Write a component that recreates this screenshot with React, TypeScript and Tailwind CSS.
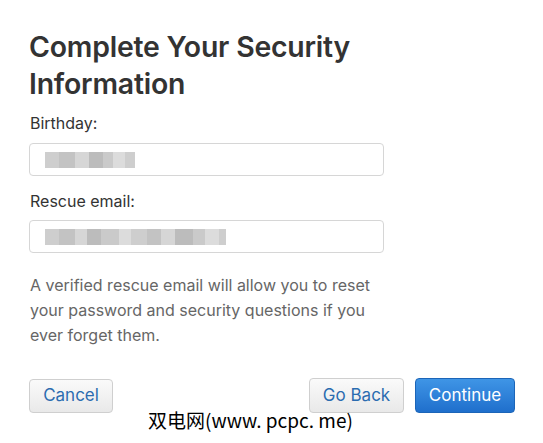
import React from "react";

function Blur({ widths }: { widths: number[] }) {
  const shades = ["#c9c9c9", "#bdbdbd", "#d2d2d2", "#b5b5b5", "#c4c4c4", "#d8d8d8"];
  return (
    <div className="flex h-[16px] items-center">
      {widths.map((w, i) => (
        <div
          key={i}
          className="h-full"
          style={{ width: w, background: shades[i % shades.length], opacity: 0.9 }}
        />
      ))}
    </div>
  );
}

export default function App() {
  return (
    <div
      className="relative h-[443px] w-[543px] overflow-hidden bg-white"
      style={{ fontFamily: "Inter, 'Noto Sans', sans-serif" }}
    >
      <div className="pl-[29px] pt-[28px]">
        <h1 className="text-[28.4px] font-semibold leading-[37px] tracking-[-0.2px] text-[#333333]">
          Complete Your Security
          <br />
          Information
        </h1>
        <div className="mt-[11px] w-[355px]">
          <div className="pl-[1px] text-[16px] leading-[20px] text-[#333333]">Birthday:</div>
          <div className="mt-[10px] flex h-[33px] items-center rounded-[4px] border border-[#d6d6d6] px-[15px]">
            <Blur widths={[14, 16, 14, 14, 10, 12, 10]} />
          </div>
          <div className="mt-[15px] pl-[1px] text-[16px] leading-[20px] text-[#333333]">Rescue email:</div>
          <div className="mt-[9px] flex h-[33px] items-center rounded-[4px] border border-[#d6d6d6] px-[15px]">
            <Blur widths={[14, 16, 12, 14, 18, 12, 16, 14, 14, 18, 12, 14, 7]} />
          </div>
        </div>
        <p className="mt-[20px] w-[360px] pl-[1px] text-[16px] leading-[25px] text-[#666666]">
          A verified rescue email will allow you to reset your password and security questions if you ever forget them.
        </p>
        <div className="mt-[30px] flex w-[486px] items-center">
          <button className="h-[34px] w-[84px] rounded-[4px] border border-[#cfcfcf] bg-gradient-to-b from-[#fafafa] to-[#e9e9e9] text-[17px] text-[#2b6cb0]">
            Cancel
          </button>
          <div className="ml-auto flex gap-[11px]">
            <button className="h-[35px] w-[95px] rounded-[4px] border border-[#cfcfcf] bg-gradient-to-b from-[#fafafa] to-[#e9e9e9] text-[17px] text-[#2b6cb0]">
              Go Back
            </button>
            <button className="h-[35px] w-[100px] rounded-[4px] border border-[#1c65b8] bg-gradient-to-b from-[#3f95e6] to-[#1f6fcc] text-[17px] text-white">
              Continue
            </button>
          </div>
        </div>
      </div>
      <div
        className="absolute left-[148px] top-[408px] text-[19px] leading-[24px] text-black"
        style={{ fontFamily: "'Noto Sans CJK SC', 'DejaVu Sans', sans-serif" }}
      >
        双电网(www. pcpc. me)
      </div>
    </div>
  );
}
